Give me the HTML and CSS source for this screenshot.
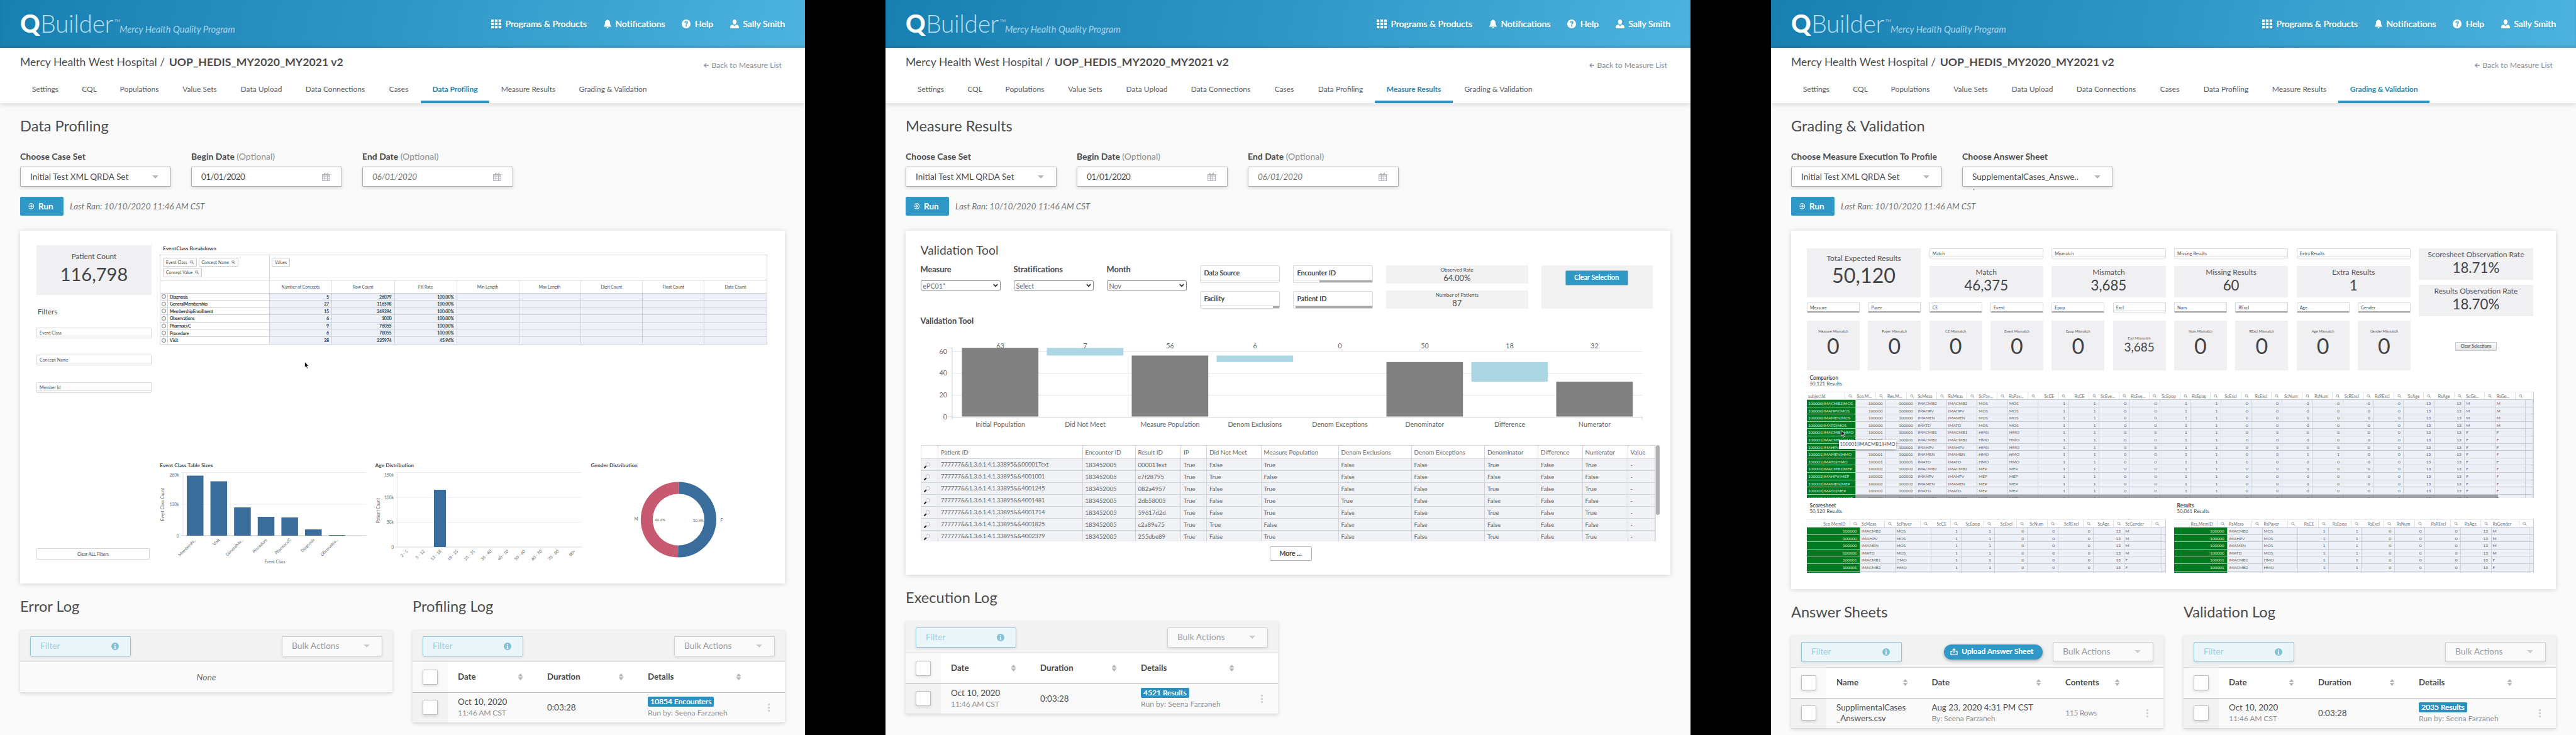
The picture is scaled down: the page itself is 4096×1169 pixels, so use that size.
FILE: index.html
```html
<!DOCTYPE html>
<html lang="en">
<head>
<meta charset="utf-8">
<title>QBuilder</title>
<link rel="stylesheet" href="styles.css">
</head>
<body>
<svg class="sprite" aria-hidden="true">
  <symbol id="i-grid" viewBox="0 0 16 14"><path d="M0 0h4.2v3.8H0zM5.9 0h4.2v3.8H5.9zM11.8 0H16v3.8h-4.2zM0 5.1h4.2v3.8H0zM5.9 5.1h4.2v3.8H5.9zM11.8 5.1H16v3.8h-4.2zM0 10.2h4.2V14H0zM5.9 10.2h4.2V14H5.9zM11.8 10.2H16V14h-4.2z"/></symbol>
  <symbol id="i-bell" viewBox="0 0 12 14"><path d="M6 0c.6 0 .9.4.9.9C8.900 1.400 10 3 10 5c0 3 .6 4.600 2 5.700V11.500H0v-.8C1.400 9.600 2 8 2 5c0-2 1.100-3.600 3.100-4.100C5.100.4 5.400 0 6 0zM4.400 12.200h3.200C7.600 13.200 6.900 14 6 14s-1.600-.8-1.600-1.800z"/></symbol>
  <symbol id="i-help" viewBox="0 0 14 14"><path fill-rule="evenodd" d="M7 0a7 7 0 1 1 0 14A7 7 0 0 1 7 0zM4.300 5.200h1.900c0-.6.3-1 .9-1 .5 0 .8.3.8.8 0 1-1.700 1.100-1.700 3.200h1.800C8 6.800 9.900 6.600 9.900 4.900 9.900 3.400 8.700 2.600 7.100 2.600c-1.700 0-2.800 1-2.800 2.600zM6.100 9.200v2H8v-2z"/></symbol>
  <symbol id="i-user" viewBox="0 0 14 14"><path d="M7 0c2 0 3.200 1.500 3.200 3.700S8.800 8 7 8 3.800 5.900 3.800 3.700 5 0 7 0zM4.200 8.200L7 10.800l2.800-2.600C12.500 8.700 14 9.800 14 12.300V14H0v-1.700C0 9.800 1.500 8.700 4.200 8.200z"/></symbol>
  <symbol id="i-back" viewBox="0 0 8 8"><path fill="none" stroke="currentColor" stroke-width="1.400" d="M7.800 4H1M4 .9L.9 4 4 7.100"/></symbol>
  <symbol id="i-cal" viewBox="0 0 13 13"><path fill="none" stroke="currentColor" d="M.5 2.500h12v10H.5zM.5 6h12M.5 9.300h12M4.500 4v8.500M8.500 4v8.500M.5 4h12M3.500.3h1.500v2.200H3.500zM8 .3h1.500v2.200H8z"/></symbol>
  <symbol id="i-run" viewBox="0 0 10 10"><path fill="none" stroke="currentColor" stroke-width="1.200" d="M1.200 2.400A4.200 4.200 0 1 1 1.200 7.600M0 5h6M4.200 2.900L6.300 5 4.200 7.100"/></symbol>
  <symbol id="i-info" viewBox="0 0 12 12"><path fill-rule="evenodd" d="M6 0a6 6 0 1 1 0 12A6 6 0 0 1 6 0zM5 2.200v1.700h2V2.200zM4.600 5v1H5v3h-.5v1h3V9H7V5z"/></symbol>
  <symbol id="i-caret" viewBox="0 0 10 5"><path d="M0 0h10L5 5z"/></symbol>
  <symbol id="i-sort" viewBox="0 0 8 11"><path d="M0 4.700h8L4 0zM0 6.300h8L4 11z"/></symbol>
  <symbol id="i-search" viewBox="0 0 8 8"><circle cx="3.300" cy="3.300" r="2.500" fill="none" stroke="currentColor" stroke-width=".9"/><path stroke="currentColor" stroke-width="1.200" d="M5.200 5.200l2.400 2.400"/></symbol>
  <symbol id="i-mag" viewBox="0 0 10 10"><circle cx="6.300" cy="3.700" r="2.900" fill="#fff" stroke="#a9adb5" stroke-width=".9"/><path stroke="#222" stroke-width="2" d="M.5 9.500l3.200-3.200"/></symbol>
  <symbol id="i-chev" viewBox="0 0 8 6"><path fill="none" stroke="#333" stroke-width="1.800" d="M.8 1L4 4.400 7.200 1"/></symbol>
  <symbol id="i-up" viewBox="0 0 12 11"><path fill="none" stroke="currentColor" stroke-width="1.300" d="M3.500 5H1v5.300h10V5H8.500M6 8V1.200M3.600 3.400L6 1l2.400 2.400"/></symbol>
  <symbol id="i-cursor" viewBox="0 0 8 12"><path fill="#111" stroke="#fff" stroke-width=".7" d="M.5.5v9l2-1.700 1.500 3.500 1.500-.7L4 7.300h3z"/></symbol>
</svg>

<div class="boards">

<!-- Data Profiling -->
<section class="screen">
  <header class="top">
    <div class="brand"><span class="logo"><b>Q</b>Builder<sup>TM</sup></span><i>Mercy Health Quality Program</i></div>
    <nav class="links"><a><svg class="g"><use href="#i-grid"/></svg>Programs &amp; Products</a><a><svg class="b"><use href="#i-bell"/></svg>Notifications</a><a><svg><use href="#i-help"/></svg>Help</a><a><svg><use href="#i-user"/></svg>Sally Smith</a></nav>
  </header>
  <div class="sub">
    <div class="crumb"><div class="path">Mercy Health West Hospital / <b>UOP_HEDIS_MY2020_MY2021 v2</b></div><a class="back"><svg><use href="#i-back"/></svg>Back to Measure List</a></div>
    <nav class="tabs"><a>Settings</a><a>CQL</a><a>Populations</a><a>Value Sets</a><a>Data Upload</a><a>Data Connections</a><a>Cases</a><a class="on">Data Profiling</a><a>Measure Results</a><a>Grading &amp; Validation</a></nav>
  </div>
  <main class="main">
    <h2>Data Profiling</h2>
    <div class="fields">
      <label><span>Choose Case Set</span><div class="field">Initial Test XML QRDA Set<svg class="caret"><use href="#i-caret"/></svg></div></label>
      <label><span>Begin Date <em>(Optional)</em></span><div class="field date">01/01/2020<svg class="cal"><use href="#i-cal"/></svg></div></label>
      <label><span>End Date <em>(Optional)</em></span><div class="field date ph">06/01/2020<svg class="cal"><use href="#i-cal"/></svg></div></label>
    </div>
    <div class="runrow"><button class="run"><svg><use href="#i-run"/></svg>Run</button><i>Last Ran: 10/10/2020 11:46 AM CST</i></div>

    <div class="card profile">
      <div class="side">
        <div class="tile count"><span>Patient Count</span><strong>116,798</strong></div>
        <h5>Filters</h5>
        <div class="pick">Event Class</div>
        <div class="pick">Concept Name</div>
        <div class="pick">Member Id</div>
        <div class="clearall">Clear ALL Filters</div>
      </div>
      <div class="body">
        <h6 class="ind">EventClass Breakdown</h6>
        <div class="pivot">
          <div class="chips"><div><span>Event Class<svg><use href="#i-search"/></svg></span><span>Concept Name<svg><use href="#i-search"/></svg></span><span>Concept Value<svg><use href="#i-search"/></svg></span></div><div><span>Values</span></div></div>
          <div id="pivot"></div>
        </div>
        <div class="charts">
          <div><h6>Event Class Table Sizes</h6><svg id="sizes" viewBox="254 746 342 160" width="342" height="160"></svg></div>
          <div><h6>Age Distribution</h6><svg id="ages" viewBox="596.500 746 343 160" width="343" height="160"></svg></div>
          <div><h6>Gender Distribution</h6><svg viewBox="939.500 746 280 160" width="280" height="160">
            <path fill="none" stroke="#c75a70" stroke-width="19" d="M1079 775.900A50.500 50.500 0 0 0 1077.700 876.900"/>
            <path fill="none" stroke="#3a6c9c" stroke-width="19" d="M1079 775.900A50.500 50.500 0 1 1 1077.700 876.900"/>
            <g class="ax"><text x="1008" y="828">M</text><text x="1145" y="830">F</text><text x="1040.500" y="829" class="s">49.6%</text><text x="1101.500" y="829.500" class="s">50.4%</text></g>
          </svg></div>
        </div>
      </div>
      <svg class="cursor"><use href="#i-cursor"/></svg>
    </div>

    <div class="logs">
      <div><h2>Error Log</h2>
        <div class="box">
          <div class="bar"><div class="filter">Filter<svg><use href="#i-info"/></svg></div><div class="bulk">Bulk Actions<svg class="caret"><use href="#i-caret"/></svg></div></div>
          <div class="none">None</div>
        </div>
      </div>
      <div><h2>Profiling Log</h2>
        <div class="box">
          <div class="bar"><div class="filter">Filter<svg><use href="#i-info"/></svg></div><div class="bulk">Bulk Actions<svg class="caret"><use href="#i-caret"/></svg></div></div>
          <div class="lrow head"><div><span class="chk"></span></div><div>Date<svg><use href="#i-sort"/></svg></div><div>Duration<svg><use href="#i-sort"/></svg></div><div>Details<svg><use href="#i-sort"/></svg></div><div></div></div>
          <div class="lrow"><div><span class="chk"></span></div><div class="two"><span>Oct 10, 2020</span><small>11:46 AM CST</small></div><div>0:03:28</div><div class="two"><mark>10854 Encounters</mark><small>Run by: Seena Farzaneh</small></div><div class="dots"><i></i><i></i><i></i></div></div>
        </div>
      </div>
    </div>
  </main>
</section>

<!-- Measure Results -->
<section class="screen">
  <header class="top">
    <div class="brand"><span class="logo"><b>Q</b>Builder<sup>TM</sup></span><i>Mercy Health Quality Program</i></div>
    <nav class="links"><a><svg class="g"><use href="#i-grid"/></svg>Programs &amp; Products</a><a><svg class="b"><use href="#i-bell"/></svg>Notifications</a><a><svg><use href="#i-help"/></svg>Help</a><a><svg><use href="#i-user"/></svg>Sally Smith</a></nav>
  </header>
  <div class="sub">
    <div class="crumb"><div class="path">Mercy Health West Hospital / <b>UOP_HEDIS_MY2020_MY2021 v2</b></div><a class="back"><svg><use href="#i-back"/></svg>Back to Measure List</a></div>
    <nav class="tabs"><a>Settings</a><a>CQL</a><a>Populations</a><a>Value Sets</a><a>Data Upload</a><a>Data Connections</a><a>Cases</a><a>Data Profiling</a><a class="on">Measure Results</a><a>Grading &amp; Validation</a></nav>
  </div>
  <main class="main">
    <h2>Measure Results</h2>
    <div class="fields">
      <label><span>Choose Case Set</span><div class="field">Initial Test XML QRDA Set<svg class="caret"><use href="#i-caret"/></svg></div></label>
      <label><span>Begin Date <em>(Optional)</em></span><div class="field date">01/01/2020<svg class="cal"><use href="#i-cal"/></svg></div></label>
      <label><span>End Date <em>(Optional)</em></span><div class="field date ph">06/01/2020<svg class="cal"><use href="#i-cal"/></svg></div></label>
    </div>
    <div class="runrow"><button class="run"><svg><use href="#i-run"/></svg>Run</button><i>Last Ran: 10/10/2020 11:46 AM CST</i></div>

    <div class="card results">
      <h3>Validation Tool</h3>
      <div class="controls">
        <div class="sel"><b>Measure</b><div>ePC01*<svg><use href="#i-chev"/></svg></div></div>
        <div class="sel"><b>Stratifications</b><div>Select<svg><use href="#i-chev"/></svg></div></div>
        <div class="sel"><b>Month</b><div>Nov<svg><use href="#i-chev"/></svg></div></div>
        <div class="stack"><div class="lb">Data Source<i></i></div><div class="lb">Facility<i style="--w:8%"></i></div></div>
        <div class="stack"><div class="lb">Encounter ID<i style="--w:67%"></i></div><div class="lb">Patient ID<i style="--w:98%"></i></div></div>
        <div class="stack"><div class="kpi"><small>Observed Rate</small>64.00%</div><div class="kpi"><small>Number of Patients</small>87</div></div>
        <div class="clr"><button>Clear Selection</button></div>
      </div>
      <h4>Validation Tool</h4>
      <svg id="waterfall" viewBox="55.500 518 1170 189.500" width="1170" height="189.500"></svg>
      <div class="grid"><div id="patients"></div><div class="thumb"></div></div>
      <button class="more">More ...</button>
    </div>

    <div class="logs">
      <div><h2>Execution Log</h2>
        <div class="box">
          <div class="bar"><div class="filter">Filter<svg><use href="#i-info"/></svg></div><div class="bulk">Bulk Actions<svg class="caret"><use href="#i-caret"/></svg></div></div>
          <div class="lrow head"><div><span class="chk"></span></div><div>Date<svg><use href="#i-sort"/></svg></div><div>Duration<svg><use href="#i-sort"/></svg></div><div>Details<svg><use href="#i-sort"/></svg></div><div></div></div>
          <div class="lrow"><div><span class="chk"></span></div><div class="two"><span>Oct 10, 2020</span><small>11:46 AM CST</small></div><div>0:03:28</div><div class="two"><mark>4521 Results</mark><small>Run by: Seena Farzaneh</small></div><div class="dots"><i></i><i></i><i></i></div></div>
        </div>
      </div>
    </div>
  </main>
</section>

<!-- Grading & Validation -->
<section class="screen">
  <header class="top">
    <div class="brand"><span class="logo"><b>Q</b>Builder<sup>TM</sup></span><i>Mercy Health Quality Program</i></div>
    <nav class="links"><a><svg class="g"><use href="#i-grid"/></svg>Programs &amp; Products</a><a><svg class="b"><use href="#i-bell"/></svg>Notifications</a><a><svg><use href="#i-help"/></svg>Help</a><a><svg><use href="#i-user"/></svg>Sally Smith</a></nav>
  </header>
  <div class="sub">
    <div class="crumb"><div class="path">Mercy Health West Hospital / <b>UOP_HEDIS_MY2020_MY2021 v2</b></div><a class="back"><svg><use href="#i-back"/></svg>Back to Measure List</a></div>
    <nav class="tabs"><a>Settings</a><a>CQL</a><a>Populations</a><a>Value Sets</a><a>Data Upload</a><a>Data Connections</a><a>Cases</a><a>Data Profiling</a><a>Measure Results</a><a class="on">Grading &amp; Validation</a></nav>
  </div>
  <main class="main">
    <h2>Grading &amp; Validation</h2>
    <div class="fields">
      <label><span>Choose Measure Execution To Profile</span><div class="field">Initial Test XML QRDA Set<svg class="caret"><use href="#i-caret"/></svg></div></label>
      <label class="spill"><span>Choose Answer Sheet</span><div class="field">SupplementalCases_Answe..<svg class="caret"><use href="#i-caret"/></svg></div><u>.</u></label>
    </div>
    <div class="runrow"><button class="run"><svg><use href="#i-run"/></svg>Run</button><i>Last Ran: 10/10/2020 11:46 AM CST</i></div>

    <div class="card grading">
      <div class="score">
        <div class="tile total"><span>Total Expected Results</span><strong>50,120</strong></div>
        <div class="pick w2 c3">Match</div><div class="pick w2 c5">Mismatch</div><div class="pick w2 c7">Missing Results</div><div class="pick w2 c9">Extra Results</div>
        <div class="tile mid c3"><span>Match</span><strong>46,375</strong></div><div class="tile mid c5"><span>Mismatch</span><strong>3,685</strong></div><div class="tile mid c7"><span>Missing Results</span><strong>60</strong></div><div class="tile mid c9"><span>Extra Results</span><strong>1</strong></div>
        <div class="pick full">Measure</div><div class="pick full">Payer</div><div class="pick full">CE</div><div class="pick full">Event</div><div class="pick full">Epop</div><div class="pick r5">Excl</div><div class="pick full">Num</div><div class="pick full">RExcl</div><div class="pick full">Age</div><div class="pick full">Gender</div>
        <div class="tile one"><span>Measure Mismatch</span><strong>0</strong></div><div class="tile one"><span>Payer Mismatch</span><strong>0</strong></div><div class="tile one"><span>CE Mismatch</span><strong>0</strong></div><div class="tile one"><span>Event Mismatch</span><strong>0</strong></div><div class="tile one"><span>Epop Mismatch</span><strong>0</strong></div><div class="tile one ex"><span>Excl Mismatch</span><strong>3,685</strong></div><div class="tile one"><span>Num Mismatch</span><strong>0</strong></div><div class="tile one"><span>RExcl Mismatch</span><strong>0</strong></div><div class="tile one"><span>Age Mismatch</span><strong>0</strong></div><div class="tile one"><span>Gender Mismatch</span><strong>0</strong></div>
        <div class="rates"><div class="tile mid"><span>Scoresheet Observation Rate</span><strong>18.71%</strong></div><div class="tile mid"><span>Results Observation Rate</span><strong>18.70%</strong></div><button>Clear Selections</button></div>
      </div>
      <div class="cap"><b>Comparison</b>50,121 Results</div>
      <div class="sheet big" id="comparison"></div>
      <div class="pair">
        <div><div class="cap"><b>Scoresheet</b>50,120 Results</div><div class="sheet" id="scoresheet"></div></div>
        <div><div class="cap"><b>Results</b>50,061 Results</div><div class="sheet" id="resultsheet"></div></div>
      </div>
      <div class="tip">100001|IMACMB1|HMO</div>
      <svg class="cursor"><use href="#i-cursor"/></svg>
    </div>

    <div class="logs">
      <div><h2>Answer Sheets</h2>
        <div class="box">
          <div class="bar"><div class="filter">Filter<svg><use href="#i-info"/></svg></div><button class="upload"><svg><use href="#i-up"/></svg>Upload Answer Sheet</button><div class="bulk">Bulk Actions<svg class="caret"><use href="#i-caret"/></svg></div></div>
          <div class="lrow head ans"><div><span class="chk"></span></div><div>Name<svg><use href="#i-sort"/></svg></div><div>Date<svg><use href="#i-sort"/></svg></div><div>Contents<svg><use href="#i-sort"/></svg></div><div></div></div>
          <div class="lrow ans"><div><span class="chk"></span></div><div class="two"><span>SupplimentalCases</span><span>_Answers.csv</span></div><div class="two"><span>Aug 23, 2020 4:31 PM CST</span><small>By: Seena Farzaneh</small></div><div><small class="rows">115 Rows</small></div><div class="dots"><i></i><i></i><i></i></div></div>
        </div>
      </div>
      <div><h2>Validation Log</h2>
        <div class="box">
          <div class="bar"><div class="filter">Filter<svg><use href="#i-info"/></svg></div><div class="bulk">Bulk Actions<svg class="caret"><use href="#i-caret"/></svg></div></div>
          <div class="lrow head"><div><span class="chk"></span></div><div>Date<svg><use href="#i-sort"/></svg></div><div>Duration<svg><use href="#i-sort"/></svg></div><div>Details<svg><use href="#i-sort"/></svg></div><div></div></div>
          <div class="lrow"><div><span class="chk"></span></div><div class="two"><span>Oct 10, 2020</span><small>11:46 AM CST</small></div><div>0:03:28</div><div class="two"><mark>2035 Results</mark><small>Run by: Seena Farzaneh</small></div><div class="dots"><i></i><i></i><i></i></div></div>
        </div>
      </div>
    </div>
  </main>
</section>

</div>
<script src="data.js"></script>
</body>
</html>
```
FILE: styles.css
```css
* { box-sizing: border-box; }
body { margin: 0; background: #000; font: 14px/1.2 Lato, "Open Sans", sans-serif; color: #4b4c4e; }
svg { fill: currentColor; display: block; flex: none; overflow: visible; }
.sprite { position: absolute; width: 0; height: 0; }
h2, h3, h4, h5, h6 { margin: 0; font-weight: 400; }
button { font: inherit; border: 0; padding: 0; }

.boards { display: grid; grid-template-columns: repeat(3, 1280px); gap: 128px; height: 1169px; overflow: hidden; }
.screen { background: #fafafa; height: 1169px; overflow: hidden; }

/* header */
.top { height: 76px; padding: 0 32px; display: flex; justify-content: space-between; align-items: center; background: linear-gradient(100deg, #1780b2, #2f97c7 50%, #4cb2de); box-shadow: inset 0 -2px 3px rgba(0,50,90,.12); color: #fff; }
.brand { display: flex; align-items: baseline; line-height: 74px; height: 76px; }
.logo { font-size: 39px; font-weight: 300; color: #b9def0; display: flex; align-items: baseline; width: 158px; white-space: nowrap; letter-spacing: -.4px; }
.logo b { font-weight: 900; color: #fff; margin-right: 1px; }
.logo sup { font-size: 6px; font-weight: 400; line-height: 1; vertical-align: baseline; position: relative; top: -17px; margin-left: 2px; letter-spacing: 0; }
.brand i { font-size: 14.600px; color: #a6d4ea; }
.links { display: flex; gap: 27px; font-size: 14px; }
.links a { display: flex; align-items: center; gap: 6.500px; text-shadow: .2px 0 #fff; }
.links svg { width: 14px; height: 14px; }
.links .g { width: 16px; }
.links .b { width: 12px; }

.sub { height: 88px; background: #fff; padding: 0 32px; box-shadow: 0 2px 8px rgba(0,0,0,.15); position: relative; }
.crumb { height: 52px; display: flex; justify-content: space-between; padding-top: 11px; line-height: 24px; }
.path { font-size: 17.600px; }
.path b { font-size: 17.700px; margin-left: 2px; }
.back { font-size: 12.200px; color: #8d8f92; display: flex; align-items: center; gap: 4px; padding: 6px 5px 0 0; height: 28px; }
.back svg { width: 8px; height: 8px; }
.tabs { display: grid; grid-template-columns: 80px 60px 99px 93px 103px 132px 70px 109px 124px 145px; height: 36px; font-size: 12px; text-align: center; color: #606163; }
.tabs a { line-height: 20px; padding-top: 3.500px; border-bottom: 4px solid transparent; white-space: nowrap; }
.tabs .on { color: #2a87b3; border-color: #2f93be; font-weight: 700; letter-spacing: -.1px; }

/* page */
.main { padding: 21px 32px 0; }
h2 { font-size: 23.600px; line-height: 30px; }
.fields { display: flex; gap: 32px; margin-top: 23.500px; }
.fields label { width: 240px; display: block; position: relative; }
.fields span { display: block; font-size: 14px; font-weight: 700; line-height: 20px; white-space: nowrap; }
.fields em { font-style: normal; font-weight: 400; color: #8b8d90; }
.field { margin-top: 6.500px; height: 32px; width: 240px; background: #fff; border: 1px solid #aeb0b3; border-radius: 2px; box-shadow: 0 2px 5px rgba(0,0,0,.13); padding: 0 15px; display: flex; justify-content: space-between; align-items: center; font-size: 13.600px; white-space: nowrap; }
.date { letter-spacing: -.6px; }
.ph { font-style: italic; color: #77797c; letter-spacing: -.3px; }
.caret { width: 10px; height: 5px; color: #b3b5b8; margin-right: 4px; }
.cal { width: 13px; height: 13px; color: #b0b2b5; margin-right: 3px; }
.spill u { position: absolute; left: 17px; top: 52px; font-size: 12px; text-decoration: none; }
.runrow { display: flex; align-items: center; gap: 10px; margin-top: 16px; height: 30px; color: #727477; font-size: 13.500px; }
.run { width: 69px; height: 30px; background: #2f98c6; color: #fff; border-radius: 2px; display: flex; align-items: center; padding-left: 13px; gap: 6px; font-weight: 700; font-size: 13.500px; }
.run svg { width: 10px; height: 10px; }
.card { background: #fff; margin-top: 24px; box-shadow: 0 1px 8px rgba(0,0,0,.16); position: relative; }
.cursor { position: absolute; width: 8px; height: 12px; }

/* shared dashboard parts */
.tile { background: #f0f0f2; display: flex; flex-direction: column; align-items: center; color: #55565a; }
.tile strong { font-weight: 400; color: #424346; }
.pick { height: 17px; border: 1px solid #d9dadd; border-radius: 1px; background: #fff; box-shadow: inset 0 -2px #fff, inset 0 -3px #dcdde0; font-size: 7px; line-height: 14px; padding-left: 4px; color: #4a4b4e; }
.pick.full { box-shadow: inset 0 -2px #a9a9ab; }
h6 { font-size: 8.400px; font-weight: 700; line-height: 12px; }

/* data profiling */
.profile { height: 561px; padding: 23px 0 0 26px; display: grid; grid-template-columns: 183px 965.500px; gap: 13px; }
.count { height: 79px; }
.count span { font-size: 11.800px; line-height: 16px; margin-top: 10px; }
.count strong { font-size: 29px; line-height: 34px; margin-top: 3px; }
h5 { font-size: 11.500px; line-height: 14px; margin: 20px 0 17.500px 2px; }
.side .pick { margin-bottom: 26.500px; }
.side .clearall { width: 180px; height: 18.500px; margin-top: 247px; border: 1px solid #d3d5d8; border-radius: 2px; text-align: center; font-size: 7px; line-height: 17px; }
.ind { padding-left: 5px; margin: -1.500px 0 4px; }
.pivot { border: 1px solid #d0d3d8; }
.chips { display: grid; grid-template-columns: 174px 1fr; height: 39px; font-size: 6.700px; }
.chips > div { display: flex; flex-wrap: wrap; gap: 2px 3px; padding: 4px 0 0 4px; align-content: flex-start; border-right: 1px solid #d0d3d8; }
.chips > div + div { padding-left: 3px; border: 0; }
.chips span { height: 14.500px; border: 1px solid #c9cbd0; border-radius: 1px; padding: 0 4px; display: flex; gap: 4px; align-items: center; }
.chips svg { width: 6px; height: 6px; }
.prow { display: grid; grid-template-columns: 174px 99px 99.500px 99px 99px 98.200px 98.300px 98.500px 1fr; height: 11.600px; font-size: 6.700px; line-height: 10.500px; }
.prow > div { border-top: 1px solid #cfd1da; border-right: 1px solid #cfd1d8; background: #edf0f7; text-align: right; padding-right: 4px; text-shadow: .2px 0 currentColor; }
.prow > div:first-child { background: #fff; text-align: left; display: flex; align-items: center; }
.prow > div:last-child { border-right: 0; }
.prow i { width: 12px; height: 100%; border-right: 1px solid #cfd1d8; margin-right: 3px; display: flex; align-items: center; justify-content: center; }
.prow i::before { content: ""; width: 5px; height: 5px; border: 1.500px solid #66686c; border-radius: 50%; }
.prow.ph2 { height: 21px; line-height: 20px; }
.prow.ph2 > div { background: #fff; text-align: center; padding: 0; text-shadow: none; border-right-color: #e3e5e8; }
.charts { display: grid; grid-template-columns: 342.500px 343px 280px; margin-top: 186.500px; }
.ax text { font-size: 6.600px; fill: #5d5f62; }
.ax .s { font-size: 6.200px; }
.ax .e { text-anchor: end; }
.ax .m { text-anchor: middle; }
.profile .cursor { left: 452px; top: 208px; }

/* measure results */
.results { height: 547px; padding: 18.500px 0 0 23.500px; }
h3 { font-size: 19.300px; line-height: 24px; }
.controls { display: grid; grid-template-columns: repeat(5, 127.500px) 226.500px 177px; gap: 20.500px; margin-top: 12px; height: 69.500px; }
.sel b { display: block; font-size: 12.900px; line-height: 16px; margin: -1.500px 0 10px; letter-spacing: -.1px; }
.sel div { height: 16px; border: 1px solid #85878a; border-radius: 2px; font-size: 10.700px; line-height: 15px; padding: 0 3px; display: flex; justify-content: space-between; align-items: center; color: #66686b; }
.sel svg { width: 8px; height: 6px; }
.stack { display: flex; flex-direction: column; justify-content: space-between; }
.lb { height: 28px; border: 1px solid #d9dadd; border-radius: 2px; font-size: 10.600px; line-height: 22px; padding-left: 6px; position: relative; text-shadow: .2px 0 currentColor; }
.lb i { position: absolute; left: 0; right: 0; bottom: 0; height: 4px; border-top: 1px solid #d5d6d9; background: linear-gradient(#aaa, #aaa) right/var(--w, 0%) 100% no-repeat; }
.kpi { height: 29px; background: #f2f2f2; text-align: center; font-size: 12.800px; line-height: 14px; }
.kpi small { display: block; font-size: 8px; line-height: 12px; padding-top: 1px; }
.clr { background: #f2f2f2; padding: 8px 39px 0 38px; }
.clr button { width: 100px; height: 24px; background: #2f98c6; border: 1px solid #9fb4c0; border-radius: 2px; color: #fff; font-size: 10.800px; text-shadow: .2px 0 #fff; display: block; }
h4 { font-size: 12.900px; line-height: 16px; font-weight: 700; margin-top: 11px; }
#waterfall text { font-size: 10.700px; fill: #66686b; text-anchor: middle; }
#waterfall .e { text-anchor: end; }
.grid { display: flex; height: 153.500px; overflow: hidden; }
#patients { width: 1169px; border: 1px solid #dcdee2; border-bottom: 0; }
.trow { display: grid; grid-template-columns: 27.500px 229.500px 84px 72.500px 41px 86.500px 123px 116px 116.500px 85px 70.500px 72px 1fr; height: 19.050px; font-size: 9.700px; line-height: 18px; color: #66686b; }
.trow > div { border-right: 1px solid #d3d5da; border-bottom: 1px solid #d3d5da; padding-left: 4px; background: #f1f2f5; white-space: nowrap; letter-spacing: -.05px; }
.trow > div:nth-child(2) { font-size: 9.400px; letter-spacing: -.15px; }
.trow > div svg { width: 10px; height: 10px; margin-top: 5px; }
.trow.th { height: 21px; line-height: 20px; }
.trow.th > div, .trow.th > div:nth-child(2) { background: #fff; font-size: 9.900px; letter-spacing: 0; }
.thumb { width: 6px; height: 111px; border-radius: 3px; background: #b0b0b0; }
.more { display: block; margin: 8px 0 0 555px; width: 67px; height: 23px; background: #fff; border: 1px solid #b5b7ba; border-radius: 2px; font-size: 10.700px; text-shadow: .2px 0 currentColor; color: inherit; }

/* grading */
.grading { height: 570px; padding: 27.500px 0 0 25px; }
.score { display: grid; width: 1154.750px; grid-template-columns: repeat(12, 83.900px); column-gap: 13.450px; grid-template-rows: 16.500px 12px 50px 8px 17px 12px 79px; }
.total { grid-column: 1 / span 2; grid-row: 1 / span 3; }
.total span { font-size: 12px; line-height: 16px; margin-top: 8.500px; }
.total strong { font-size: 32.300px; line-height: 36px; margin-top: 1px; }
.w2 { grid-row: 1; height: 16.500px; }
.c3 { grid-column: 3 / span 2; } .c5 { grid-column: 5 / span 2; } .c7 { grid-column: 7 / span 2; } .c9 { grid-column: 9 / span 2; }
.mid { grid-row: 3; height: 50px; }
.mid span { font-size: 12px; line-height: 14px; margin-top: 3px; }
.mid strong { font-size: 22.300px; line-height: 26px; margin-top: 1px; }
.full, .r5 { grid-row: 5; }
.one { grid-row: 7; }
.one span { font-size: 5.700px; line-height: 8px; margin-top: 12.500px; }
.one strong { font-size: 34px; line-height: 36px; margin-top: 1px; }
.one.ex span { margin-top: 23.500px; }
.one.ex strong { font-size: 19px; line-height: 20px; margin-top: 0; }
.rates { grid-column: 11 / span 2; grid-row: 1 / span 7; display: flex; flex-direction: column; gap: 8px; }
.rates button { width: 66.500px; height: 14px; margin: 33px auto 0; border: 1px solid #c5c6c9; border-radius: 1px; background: linear-gradient(#fff, #e3e3e5); font-size: 6.900px; font-weight: 700; color: #606266; }
.cap { padding: 7px 0 7px 4.500px; font-size: 7.900px; line-height: 9.500px; }
.cap b { display: block; font-size: 8.500px; line-height: 10px; }
.sheet { height: 85.500px; overflow: hidden; border-right: 1px solid #c9ccd2; position: relative; }
.sheet.big { height: 169.500px; width: 1155.500px; }
.srow { display: grid; height: 11.620px; font-size: 6.500px; line-height: 11px; color: #5c5e62; }
.srow > div { background: #edf0f7; border-right: 1px solid #cfd2d9; border-bottom: 1px solid #c6c9d0; padding: 0 4.500px 0 2px; white-space: nowrap; overflow: hidden; }
.srow > div:first-child { background: #007a20; color: #d8eddb; border-color: #9fc8a8; }
.srow .n { text-align: right; }
.srow.sh { height: 13.500px; line-height: 13px; font-size: 6.900px; color: #707276; }
.srow.sh > div, .srow.sh > div:first-child { background: #fff; color: inherit; border: 0; border-top: 1px solid #e8e9eb; border-bottom: 1px solid #c9ccd2; padding: 0 0 0 2px; display: flex; }
.srow.sh span { flex: 1; padding-right: 6px; }
.srow.sh svg { width: 17.500px; height: 12px; padding: 3px 5px; border-left: 1px solid #e0e1e4; }
.big::after { content: ""; position: absolute; left: 77px; bottom: 0; width: 1022px; height: 5px; background: rgba(110,110,114,.6); }
.pair { display: grid; grid-template-columns: 570.500px 571.500px; gap: 13.500px; }
.tip { position: absolute; left: 76px; top: 333px; width: 91px; height: 13.500px; background: #fff; box-shadow: 0 1px 4px rgba(0,0,0,.35); font-size: 7.900px; line-height: 13px; text-align: center; }
.grading .cursor { left: 79px; top: 317px; }

/* logs */
.logs { display: grid; grid-template-columns: 592px 592px; gap: 32px; padding-top: 21px; }
.box { margin-top: 24px; box-shadow: 0 1px 6px rgba(0,0,0,.15); background: #fafafa; }
.bar { height: 50px; background: #f2f2f2; border-bottom: 1px solid #d8d9db; display: flex; align-items: center; padding: 0 16px; font-size: 13.800px; }
.filter, .bulk { width: 160px; height: 32px; border: 1px solid; border-radius: 2px; display: flex; justify-content: space-between; align-items: center; padding: 0 15px; box-shadow: 0 2px 4px rgba(0,0,0,.08); }
.filter { background: #eaf6fa; border-color: #8dc3dc; color: #9fcfe3; }
.filter svg { width: 12px; height: 12px; color: #85c0db; margin-right: 3px; }
.bulk { margin-left: auto; background: #fafafa; border-color: #cfd0d2; color: #9a9c9f; }
.bulk .caret { color: #ccc; }
.upload { margin-left: auto; width: 157px; height: 24px; border-radius: 12px; background: #2f98c6; color: #fff; font-size: 12.100px; display: flex; align-items: center; padding-left: 10px; gap: 6px; box-shadow: 0 2px 5px rgba(0,0,0,.3); text-shadow: .2px 0 #fff; white-space: nowrap; }
.upload svg { width: 12px; height: 11px; }
.upload + .bulk { margin-left: 16px; }
.none { height: 48.500px; line-height: 48px; text-align: center; font-style: italic; font-size: 14px; border-bottom: 1px solid #dadbdd; color: #727477; }
.lrow { display: grid; grid-template-columns: 56px 142px 160px 187px 47px; height: 48.500px; border-bottom: 1px solid #dadbdd; font-size: 13.400px; }
.lrow.ans { grid-template-columns: 56px 151.500px 212.500px 125px 47px; }
.lrow > div { padding: 0 22px 0 16px; display: flex; align-items: center; justify-content: space-between; white-space: nowrap; }
.lrow > div:first-child { background: #f2f2f2; padding: 0 16px; }
.head { background: #fff; font-weight: 700; border-color: #b9bbbe; font-size: 13.300px; }
.head > div:first-child { background: #f9f9f9; }
.head svg { width: 9px; height: 11px; color: #b3b5b8; }
.chk { width: 24px; height: 24px; background: #fff; border: 1px solid #b9bbbe; border-radius: 2px; box-shadow: 0 2px 4px rgba(0,0,0,.12); }
.lrow .two { flex-direction: column; align-items: flex-start; justify-content: center; line-height: 17px; padding-right: 0; }
.lrow small { font-size: 12.200px; color: #909295; }
.lrow .rows { letter-spacing: -.4px; }
.two span + small { letter-spacing: -.15px; }
.lrow mark { background: #2b90bf; color: #fff; border-radius: 2px; padding: 0 4px; line-height: 16px; font-size: 12px; text-shadow: .2px 0 #fff; margin-bottom: 1px; }
.lrow .dots { flex-direction: column; justify-content: center; gap: 2px; padding: 0 4px 0 0; }
.dots i { width: 3px; height: 3px; background: #d3d4d6; }
```
FILE: data.js
```js
const el = id => document.getElementById(id);
const row = (cls, cells) => `<div class="${cls}">${cells.join('')}</div>`;
const cell = t => `<div>${t}</div>`;

/* event class breakdown */
const events = [['Diagnosis', 5, 26079, '100.00%'], ['GeneralMembership', 27, 116598, '100.00%'], ['MembershipEnrollment', 15, 249394, '100.00%'], ['Observations', 6, 1000, '100.00%'], ['PharmacyC', 9, 76055, '100.00%'], ['Procedure', 6, 78055, '100.00%'], ['Visit', 28, 225974, '45.96%']];
el('pivot').innerHTML =
  row('prow ph2', ['', 'Number of Concepts', 'Row Count', 'Fill Rate', 'Min Length', 'Max Length', 'Digit Count', 'Float Count', 'Date Count'].map(cell)) +
  events.map(e => row('prow', ['<i></i>' + e[0], e[1], e[2], e[3], '', '', '', '', ''].map(cell))).join('');

/* small bar charts */
const hline = (x1, x2, y, c = '#ececef') => `<path d="M${x1} ${y}H${x2}" stroke="${c}"/>`;
const tilt = (x, y, t) => `<text class="e" transform="translate(${x} ${y}) rotate(-45)">${t}</text>`;
const vtitle = (x, y, t) => `<text class="m" transform="translate(${x} ${y}) rotate(-90)">${t}</text>`;
const sizes = [['Membershi...', 756.5], ['Visit', 765.5], ['GeneralMe...', 807], ['Procedure', 822], ['PharmacyC', 823], ['Diagnosis', 842], ['Observatio...', 851]];
el('sizes').innerHTML = hline(288, 582.5, 751.5) + hline(288, 582.5, 802) + hline(288, 582.5, 851.5, '#d8d8dc') +
  '<path d="M291 751V852" stroke="#e4e4e8"/>' +
  sizes.map(([, y], i) => `<rect x="${297 + i * 37.6}" y="${y}" width="26.500" height="${852 - y}" fill="#3a6c9c"/>`).join('') +
  '<g class="ax">' + [['260k', 758], ['130k', 805], ['0', 855]].map(([t, y]) => `<text class="e" x="284.500" y="${y}">${t}</text>`).join('') +
  sizes.map(([t], i) => tilt(312.5 + i * 37.6, 859, t)).join('') + vtitle(260.5, 802, 'Event Class Count') + '<text class="m" x="437" y="896">Event Class</text></g>';
const ages = ['2 - 5', '5 - 13', '13 - 18', '18 - 25', '25 - 35', '35 - 40', '40 - 50', '50 - 60', '60 - 70', '70 - 80', '80+'];
el('ages').innerHTML = hline(628, 924.5, 751.5) + hline(628, 924.5, 791) + hline(628, 924.5, 830.5) + hline(628, 924.5, 870, '#d8d8dc') +
  '<path d="M631 751V870" stroke="#e4e4e8"/><rect x="689.500" y="779" width="19" height="91" fill="#3a6c9c"/><g class="ax">' +
  [['150k', 758], ['100k', 794], ['50k', 833], ['0', 872.5]].map(([t, y]) => `<text class="e" x="625.500" y="${y}">${t}</text>`).join('') +
  ages.map((t, i) => tilt(648.5 + i * 26.65, 877, t)).join('') + vtitle(603, 812, 'Patient Count') + '</g>';

/* waterfall */
const steps = [['Initial Population', 63, 0, 63], ['Did Not Meet', 7, 56, 63], ['Measure Population', 56, 0, 56], ['Denom Exclusions', 6, 50, 56], ['Denom Exceptions', 0, 50, 50], ['Denominator', 50, 0, 50], ['Difference', 18, 32, 50], ['Numerator', 32, 0, 32]];
const yy = v => 662.5 - v * 1.7333;
el('waterfall').innerHTML = [0, 20, 40, 60].map(v => hline(105.5, 1202.5, Math.round(yy(v)) + .5, v ? '#e6e6e8' : '#d0d1d4') + `<text class="e" x="97.500" y="${yy(v) + 4}">${v}</text>`).join('') +
  '<path fill="none" stroke="#d0d1d4" d="M101 553.500H105.500V667M101 662.500h4M1202.500 662.500v5"/>' +
  steps.map(([t, n, a, b], i) => {
    const x = 121 + i * 135, c = a ? '#add6e5' : '#808080';
    return `<rect x="${x}" y="${yy(b)}" width="121.700" height="${yy(a) - yy(b)}" fill="${c}"/><text x="${x + 61}" y="554">${n}</text><text x="${x + 61}" y="679">${t}</text>`;
  }).join('');

/* patients: T/F flags run IP … Numerator */
const pats = [['00001Text', '00001Text', 'TFTFFTFT'], ['4001001', 'c7f28795', 'TTFFFFFF'], ['4001245', '082a4957', 'TFTFFTFT'], ['4001481', '2db58005', 'TFTTFFFF'], ['4001714', '59617d2d', 'TFTFFTFT'], ['4001825', 'c2a89e75', 'TTFFFFFF'], ['4002379', '255dbe89', 'TFTFFTFT']];
el('patients').innerHTML = row('trow th', ['', 'Patient ID', 'Encounter ID', 'Result ID', 'IP', 'Did Not Meet', 'Measure Population', 'Denom Exclusions', 'Denom Exceptions', 'Denominator', 'Difference', 'Numerator', 'Value'].map(cell)) +
  pats.map(([p, r, f]) => row('trow', ['<svg><use href="#i-mag"/></svg>', '777777&amp;&amp;1.3.6.1.4.1.33895&amp;&amp;' + p, '183452005', r, ...[...f].map(c => c === 'T' ? 'True' : 'False'), '-'].map(cell))).join('');

/* comparison and sheets */
const icon = '<svg viewBox="0 0 8 8"><use href="#i-search"/></svg>';
const table = (id, cols, heads, rows, numeric) => {
  const line = (cls, cells) => `<div class="srow ${cls}" style="grid-template-columns:${cols}">${cells.join('')}</div>`;
  el(id).innerHTML = line('sh', heads.map((h, i) => h === null ? '<div></div>' : `<div class="${/CE|Epop|Excl|Num|Age|MemID/.test(h) ? 'n' : ''}"><span>${h}</span>${icon}</div>`)) +
    rows.map(r => line('', r.map((v, i) => `<div class="${numeric(i) ? 'n' : ''}">${v}</div>`))).join('');
};
const subj = [['100000', 'IMACMB2', 'MOS'], ['100000', 'IMAHPV', 'MOS'], ['100000', 'IMAMEN', 'MOS'], ['100000', 'IMATD', 'MOS'], ['100001', 'IMACMB1', 'HMO'], ['100001', 'IMACMB2', 'HMO'], ['100001', 'IMAHPV', 'HMO'], ['100001', 'IMAMEN', 'HMO'], ['100001', 'IMATD', 'HMO'], ['100002', 'IMACMB2', 'MEP'], ['100002', 'IMAHPV', 'MEP'], ['100002', 'IMAMEN', 'MEP'], ['100002', 'IMATD', 'MEP'], ['100003', 'IMACMB1', 'MCP']];
table('comparison', '77.5px repeat(22, 48.45px) 1fr',
  ['subjectId', 'Sco.M...', 'Res.M...', 'ScMeas', 'RsMeas', 'ScPay...', 'RsPay...', 'ScCE', 'RsCE', 'ScEve...', 'RsEve...', 'ScEpop', 'RsEpop', 'ScExcl', 'RsExcl', 'ScNum', 'RsNum', 'ScRExcl', 'RsRExcl', 'ScAge', 'RsAge', 'ScGe...', 'RsGe...', null],
  subj.map(([id, m, p], i) => { const n = i === 7 ? 1 : 0, g = i < 4 ? 'M' : 'F'; return [`${id}|${m}|${p}`, id, id, m, m, p, p, 1, 1, 0, 0, 1, 1, 0, 0, n, n, 0, 0, 13, 13, g, g, '']; }),
  i => (i === 1 || i === 2 || (i > 6 && i < 21)));
const half = subj.slice(0, 7).map(([id, m, p], i) => [id, m, p, 1, 1, 0, 0, 0, 13, i < 4 ? 'M' : 'F', '']);
const num = i => i === 0 || (i > 2 && i < 9);
table('scoresheet', '85px 55.5px 57px 48px 53px 52px 49px 56.5px 48.500px 60.5px 1fr', ['Sco.MemID', 'ScMeas', 'ScPayer', 'ScCE', 'ScEpop', 'ScExcl', 'ScNum', 'ScRExcl', 'ScAge', 'ScGender', null], half, num);
table('resultsheet', '85px 55.5px 56.5px 49px 52px 52.5px 48.500px 57px 48.500px 60.5px 1fr', ['Res.MemID', 'RsMeas', 'RsPayer', 'RsCE', 'RsEpop', 'RsExcl', 'RsNum', 'RsRExcl', 'RsAge', 'RsGender', null], half, num);
```
